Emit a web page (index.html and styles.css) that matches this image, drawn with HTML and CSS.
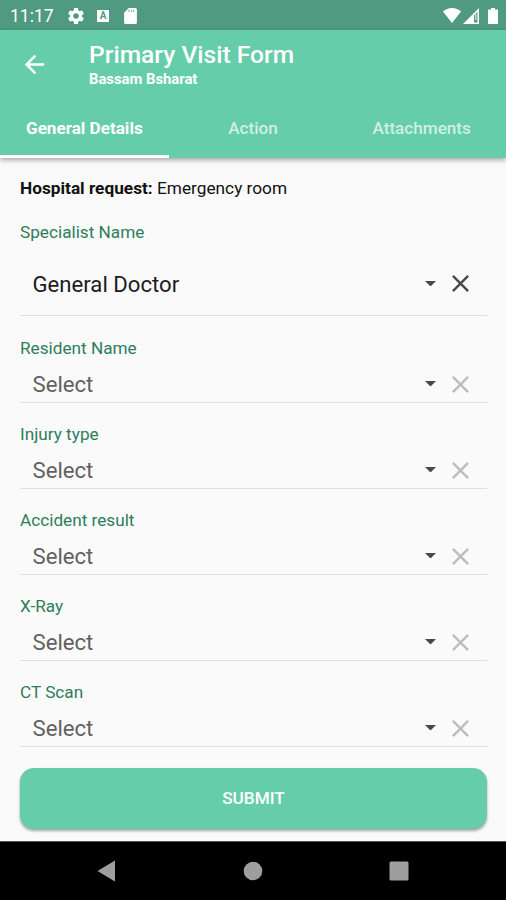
FILE: index.html
```html
<!DOCTYPE html>
<html lang="en">
<head>
    <meta charset="UTF-8">
    <meta name="viewport" content="width=device-width, initial-scale=1.0">
    <title>Primary Visit Form</title>
    <link rel="stylesheet" href="styles.css">
</head>
<body>
    <svg class="sprite" width="0" height="0">
        <symbol id="close" viewBox="0 0 24 24">
            <path d="M19 6.41L17.59 5 12 10.59 6.41 5 5 6.41 10.59 12 5 17.59 6.41 19 12 13.41 17.59 19 19 17.59 13.41 12z"/>
        </symbol>
        <symbol id="arrow" viewBox="0 0 10 5">
            <path d="M0 0l5 5 5-5z"/>
        </symbol>
    </svg>

    <div class="status-bar">
        <span class="time">11:17</span>
        <svg class="icon-gear" viewBox="2 2 20 20"><path d="M19.43 12.98c.04-.32.07-.64.07-.98s-.03-.66-.07-.98l2.11-1.65c.19-.15.24-.42.12-.64l-2-3.46c-.12-.22-.39-.3-.61-.22l-2.49 1c-.52-.4-1.08-.73-1.69-.98l-.38-2.65C14.46 2.18 14.25 2 14 2h-4c-.25 0-.46.18-.49.42l-.38 2.65c-.61.25-1.17.59-1.69.98l-2.49-1c-.23-.09-.49 0-.61.22l-2 3.46c-.13.22-.07.49.12.64l2.11 1.65c-.04.32-.07.65-.07.98s.03.66.07.98l-2.11 1.65c-.19.15-.24.42-.12.64l2 3.46c.12.22.39.3.61.22l2.49-1c.52.4 1.08.73 1.69.98l.38 2.65c.03.24.24.42.49.42h4c.25 0 .46-.18.49-.42l.38-2.65c.61-.25 1.17-.59 1.69-.98l2.49 1c.23.09.49 0 .61-.22l2-3.46c.12-.22.07-.49-.12-.64l-2.11-1.65zM12 15.5c-1.93 0-3.5-1.57-3.5-3.5s1.57-3.5 3.5-3.5 3.5 1.57 3.5 3.5-1.57 3.5-3.5 3.5z"/></svg>
        <span class="badge">A</span>
        <svg class="icon-sd" viewBox="4 2 16 20"><path d="M18 2h-8L4.02 8 4 20c0 1.100.9 2 2 2h12c1.100 0 2-.9 2-2V4c0-1.100-.9-2-2-2z"/><path class="slots" d="M10 4v3M13 4v3M16 4v3"/></svg>
        <div class="status-right">
            <svg class="icon-wifi" viewBox="0 0 18 15"><path d="M9 15L0 3.500C2.500 1.300 5.500 0 9 0s6.500 1.300 9 3.500z"/></svg>
            <svg class="icon-signal" viewBox="0 0 16 16"><path fill-rule="evenodd" d="M0 16L16 0v16zM11 7.200v7.300h3.500V3.700z"/><path d="M12.300 6h1v6h-1z"/></svg>
            <svg class="icon-battery" viewBox="0 0 10 16"><path d="M3 0h4v1.500h2c.6 0 1 .4 1 1V15c0 .6-.4 1-1 1H1c-.6 0-1-.4-1-1V2.500c0-.6.4-1 1-1h2z"/></svg>
        </div>
    </div>

    <div class="header">
        <div class="toolbar">
            <svg class="back" viewBox="0 0 24 24"><path d="M20 11H7.830l5.590-5.590L12 4l-8 8 8 8 1.410-1.410L7.830 13H20v-2z"/></svg>
            <div>
                <div class="title">Primary Visit Form</div>
                <div class="subtitle">Bassam Bsharat</div>
            </div>
        </div>
        <div class="tabs">
            <div class="tab active">General Details</div>
            <div class="tab">Action</div>
            <div class="tab">Attachments</div>
        </div>
    </div>

    <div class="content">
        <div class="request"><b>Hospital request:</b> Emergency room</div>

        <div class="field filled">
            <div class="label">Specialist Name</div>
            <div class="select">
                <span class="value">General Doctor</span>
                <svg class="arrow"><use href="#arrow"/></svg>
                <svg class="close"><use href="#close"/></svg>
            </div>
        </div>
        <div class="field">
            <div class="label">Resident Name</div>
            <div class="select">
                <span class="value">Select</span>
                <svg class="arrow"><use href="#arrow"/></svg>
                <svg class="close"><use href="#close"/></svg>
            </div>
        </div>
        <div class="field">
            <div class="label">Injury type</div>
            <div class="select">
                <span class="value">Select</span>
                <svg class="arrow"><use href="#arrow"/></svg>
                <svg class="close"><use href="#close"/></svg>
            </div>
        </div>
        <div class="field">
            <div class="label">Accident result</div>
            <div class="select">
                <span class="value">Select</span>
                <svg class="arrow"><use href="#arrow"/></svg>
                <svg class="close"><use href="#close"/></svg>
            </div>
        </div>
        <div class="field">
            <div class="label">X-Ray</div>
            <div class="select">
                <span class="value">Select</span>
                <svg class="arrow"><use href="#arrow"/></svg>
                <svg class="close"><use href="#close"/></svg>
            </div>
        </div>
        <div class="field">
            <div class="label">CT Scan</div>
            <div class="select">
                <span class="value">Select</span>
                <svg class="arrow"><use href="#arrow"/></svg>
                <svg class="close"><use href="#close"/></svg>
            </div>
        </div>

        <button class="submit">SUBMIT</button>
    </div>

    <div class="nav-bar">
        <svg viewBox="0 0 20 22"><path d="M18 .5v21L.5 11z"/></svg>
        <svg viewBox="0 0 20 22"><circle cx="10" cy="11" r="9.300"/></svg>
        <svg viewBox="0 0 20 22"><rect x=".5" y="1.500" width="19" height="19" rx="1.500"/></svg>
    </div>
</body>
</html>
```
FILE: styles.css
```css
* {
    box-sizing: border-box;
}

body {
    margin: 0;
    height: 900px;
    display: flex;
    flex-direction: column;
    font-family: Roboto, sans-serif;
    background-color: #fafafa;
    overflow: hidden;
}

svg {
    display: block;
    flex: none;
    fill: currentColor;
}

.sprite {
    position: absolute;
}

.status-bar {
    height: 30px;
    flex: none;
    display: flex;
    align-items: center;
    padding: 1px 8px 0 10px;
    background-color: #4f9a80;
    color: white;
}

.time {
    width: 58px;
    font-size: 17.5px;
}

.icon-gear {
    width: 16px;
    height: 16px;
}

.badge {
    width: 12px;
    height: 12px;
    margin-left: 13px;
    background-color: white;
    color: #4f9a80;
    font-size: 10px;
    font-weight: bold;
    line-height: 12px;
    text-align: center;
}

.icon-sd {
    width: 13px;
    height: 16px;
    margin-left: 15px;
}

.slots {
    stroke: #4f9a80;
    stroke-width: 1;
}

.status-right {
    display: flex;
    align-items: center;
    margin-left: auto;
}

.icon-wifi {
    width: 18px;
    height: 15px;
}

.icon-signal {
    width: 16px;
    height: 16px;
    margin-left: 2px;
}

.icon-battery {
    width: 10px;
    height: 16px;
    margin-left: 9px;
}

.header {
    height: 128px;
    flex: none;
    background-color: #66cdaa;
    color: white;
    box-shadow: 0 2px 5px rgba(0, 0, 0, 0.35);
}

.toolbar {
    height: 69px;
    display: flex;
    align-items: center;
    padding-left: 20px;
}

.back {
    width: 29px;
    height: 29px;
    margin-right: 40px;
}

.title {
    font-size: 24.6px;
    font-weight: 500;
    line-height: 29px;
}

.subtitle {
    font-size: 14.8px;
    font-weight: bold;
    line-height: 21px;
}

.tabs {
    height: 59px;
    display: flex;
}

.tab {
    flex: 1;
    padding-bottom: 1px;
    border-bottom: 3px solid transparent;
    color: rgba(255, 255, 255, 0.7);
    font-size: 17.1px;
    font-weight: 500;
    line-height: 58px;
    text-align: center;
}

.tab.active {
    border-color: white;
    color: white;
    font-weight: bold;
}

.content {
    flex: 1;
    padding: 20px 19px 0 20px;
}

.request {
    font-size: 17.25px;
    line-height: 20px;
    color: #111;
}

.field {
    padding-top: 21px;
    border-bottom: 1px solid #e0e0e0;
}

.label {
    font-size: 17.2px;
    line-height: 20px;
    color: #2e7d5b;
}

.select {
    height: 36px;
    margin-top: 8px;
    padding: 0 12.5px;
    display: flex;
    align-items: center;
}

.value {
    flex: 1;
    font-size: 22.15px;
    color: #616161;
}

.arrow {
    width: 11px;
    height: 5.5px;
    color: #494949;
}

.close {
    width: 29px;
    height: 29px;
    margin-left: 10px;
    color: #bdbdbd;
}

.filled {
    padding-top: 24px;
}

.filled .select {
    height: 63px;
    margin-top: 10px;
}

.filled .value {
    color: #1c1c1c;
}

.filled .close {
    color: #494949;
}

.filled + .field {
    padding-top: 22px;
}

.submit {
    display: block;
    width: 100%;
    height: 61px;
    margin-top: 21px;
    padding-bottom: 3px;
    border: none;
    border-radius: 14px;
    background-color: #66cdaa;
    box-shadow: 0 2px 3px rgba(0, 0, 0, 0.35);
    color: white;
    font-family: inherit;
    font-size: 17.2px;
    font-weight: 500;
}

.nav-bar {
    height: 59px;
    flex: none;
    display: flex;
    justify-content: center;
    align-items: center;
    gap: 126px;
    border-top: 1px solid #555;
    background-color: black;
    color: #9e9e9e;
}

.nav-bar svg {
    width: 20px;
    height: 22px;
}
```
